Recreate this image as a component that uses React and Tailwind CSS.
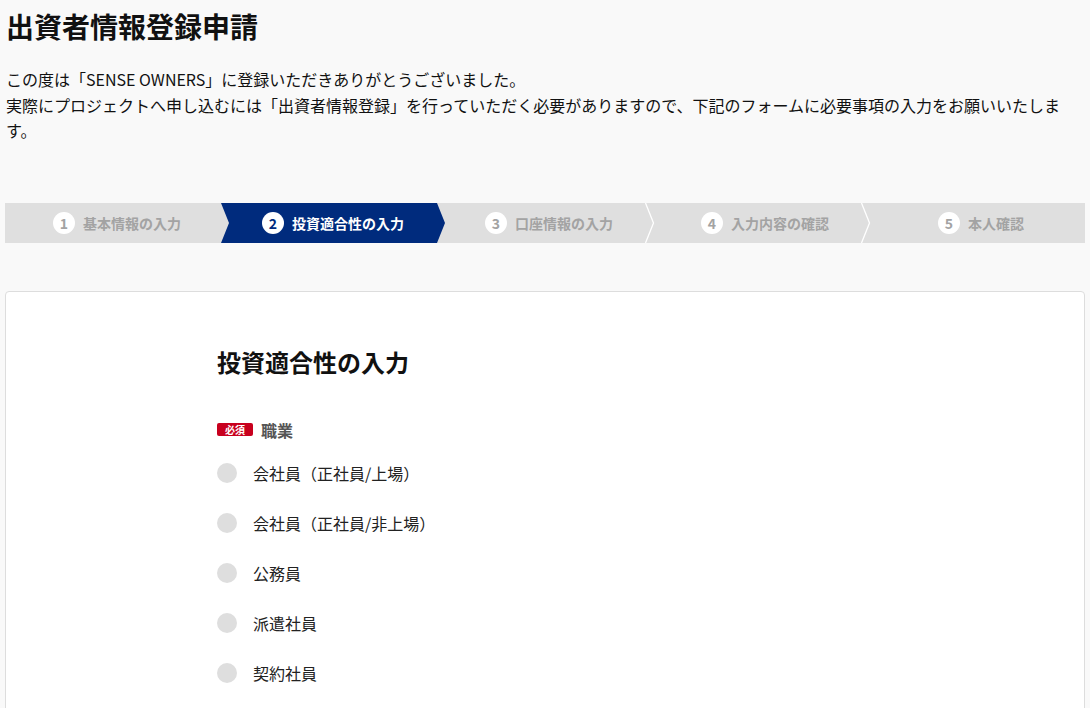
const steps = [
  { n: 1, label: "基本情報の入力" },
  { n: 2, label: "投資適合性の入力" },
  { n: 3, label: "口座情報の入力" },
  { n: 4, label: "入力内容の確認" },
  { n: 5, label: "本人確認" },
];

const jobs = [
  "会社員（正社員/上場）",
  "会社員（正社員/非上場）",
  "公務員",
  "派遣社員",
  "契約社員",
];

const ACTIVE = 2;

const StepBar = () => (
  <div className="flex h-10 bg-[#dfdfdf]">
    {steps.map((s, i) => {
      const active = s.n === ACTIVE;
      return (
        <div key={s.n} className="relative flex-1 flex items-center justify-center">
          {/* active chevron shape */}
          {active && (
            <svg
              className="absolute left-0 top-0 h-10 w-[calc(100%+8px)] z-10"
              viewBox="0 0 224 40"
              preserveAspectRatio="none"
            >
              <polygon points="0,0 216,0 224,20 216,40 0,40 8,20" fill="#002b7d" />
            </svg>
          )}
          {/* separator chevron */}
          {i < steps.length - 1 && !active && steps[i + 1].n !== ACTIVE && (
            <svg className="absolute -right-px top-0 h-10 w-[10px] z-20 translate-x-px" viewBox="0 0 10 40">
              <polyline points="0.5,0 8.5,20 0.5,40" fill="none" stroke="#ffffff" strokeWidth="1.3" />
            </svg>
          )}
          <div className="relative z-20 flex items-center gap-2 pl-2">
            <span
              className={
                "flex h-[22px] w-[22px] items-center justify-center rounded-full bg-white text-sm font-bold leading-none " +
                (active ? "text-[#002b7d]" : "text-[#a3a3a3]")
              }
            >
              {s.n}
            </span>
            <span className={"text-sm font-bold " + (active ? "text-white" : "text-[#a3a3a3]")}>
              {s.label}
            </span>
          </div>
        </div>
      );
    })}
  </div>
);

export default function App() {
  return (
    <div
      className="min-h-screen bg-[#f9f9f9] text-[#111]"
      style={{ fontFamily: '"Noto Sans CJK JP", "Noto Sans", sans-serif' }}
    >
      <div className="mx-[5px] pt-[7px]">
        <h1 className="text-[28px] font-bold leading-[38px] pl-px">出資者情報登録申請</h1>

        <p className="mt-[22px] text-base leading-[25.5px] text-[#111] pl-px">
          この度は「SENSE OWNERS」に登録いただきありがとうございました。
          <br />
          実際にプロジェクトへ申し込むには「出資者情報登録」を行っていただく必要がありますので、下記のフォームに必要事項の入力をお願いいたします。
        </p>

        <div className="mt-[59px]">
          <StepBar />
        </div>

        <div className="mt-12 rounded border border-[#dddddd] bg-white pt-[52px] pb-10">
          <div className="mx-auto w-[656px]">
            <h2 className="text-2xl font-bold leading-9">投資適合性の入力</h2>

            <div className="mt-[38px] flex items-center gap-2">
              <span className="flex h-[13px] w-9 items-center justify-center rounded-[2px] bg-[#c8001e] text-[10px] font-bold leading-none text-white">
                必須
              </span>
              <span className="text-base font-bold text-[#555]">職業</span>
            </div>

            <div className="mt-[19px] flex flex-col gap-[26px]">
              {jobs.map((j) => (
                <label key={j} className="flex items-center gap-4 h-6">
                  <span className="h-5 w-5 rounded-full bg-[#dedede]" />
                  <span className="text-base text-[#222]">{j}</span>
                </label>
              ))}
            </div>
          </div>
        </div>
      </div>
    </div>
  );
}
